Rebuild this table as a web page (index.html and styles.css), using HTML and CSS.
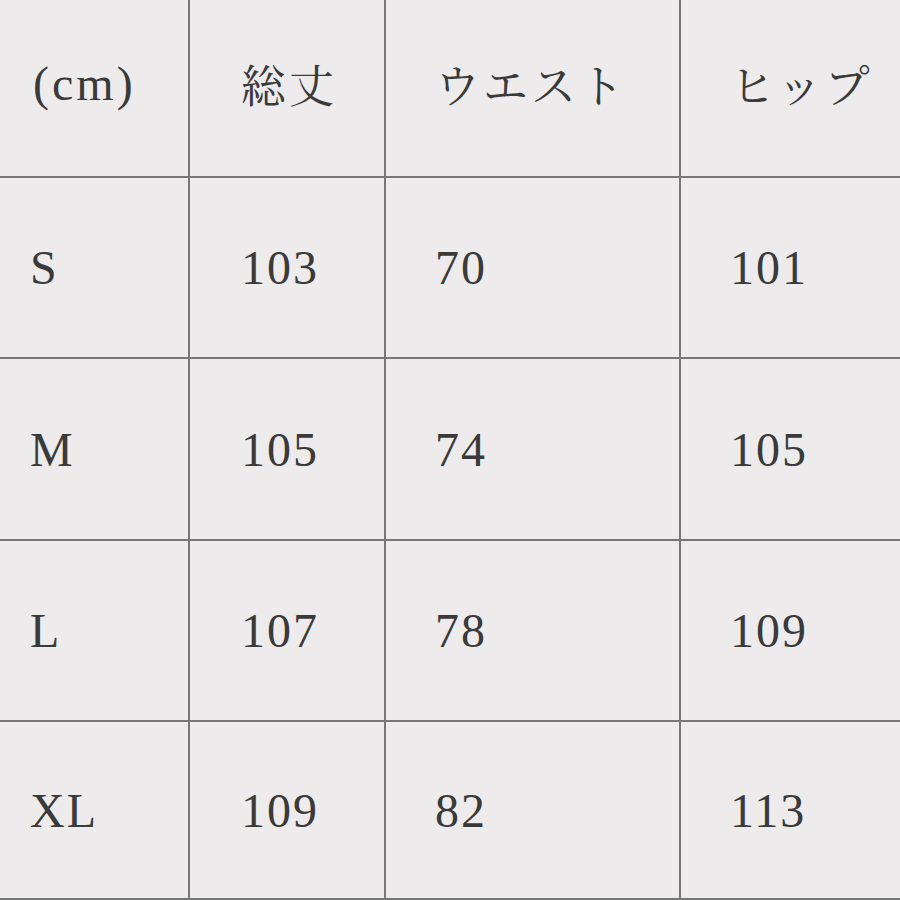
FILE: index.html
```html
<!DOCTYPE html>
<html lang="ja">
<head>
<meta charset="utf-8">
<title>サイズ表</title>
<link rel="stylesheet" href="styles.css">
</head>
<body>
<div class="size-table">
  <div class="cell c1 head unit">(cm)</div>
  <div class="cell c2 head jp">総丈</div>
  <div class="cell c3 head jp">ウエスト</div>
  <div class="cell c4 head jp">ヒップ</div>

  <div class="cell c1">S</div>
  <div class="cell c2">103</div>
  <div class="cell c3">70</div>
  <div class="cell c4">101</div>

  <div class="cell c1">M</div>
  <div class="cell c2">105</div>
  <div class="cell c3">74</div>
  <div class="cell c4">105</div>

  <div class="cell c1">L</div>
  <div class="cell c2">107</div>
  <div class="cell c3">78</div>
  <div class="cell c4">109</div>

  <div class="cell c1">XL</div>
  <div class="cell c2">109</div>
  <div class="cell c3">82</div>
  <div class="cell c4">113</div>
</div>
</body>
</html>
```

FILE: styles.css
```css
html, body {
  margin: 0;
  padding: 0;
  background: #edebec;
}

.size-table {
  width: 900px;
  height: 900px;
  display: grid;
  grid-template-columns: 190px 196px 295px 1fr;
  grid-template-rows: 178px 181px 182px 181px 178px;
  font-family: "Liberation Serif", "Noto Serif CJK JP", serif;
  font-size: 48px;
  letter-spacing: 2px;
  color: #3a3a3a;
}

.cell {
  box-sizing: border-box;
  display: flex;
  align-items: center;
  border-bottom: 2px solid #777777;
  padding-left: 51px;
}

.c1 { padding-left: 30px; border-right: 2px solid #777777; }
.c2 { border-right: 2px solid #777777; }
.c3 { border-right: 2px solid #777777; padding-left: 49px; }
.c4 { padding-left: 49px; }

.head { padding-bottom: 10px; }
.unit { padding-left: 33px; letter-spacing: 3px; }

.jp {
  font-size: 45px;
  letter-spacing: 3px;
}
```
